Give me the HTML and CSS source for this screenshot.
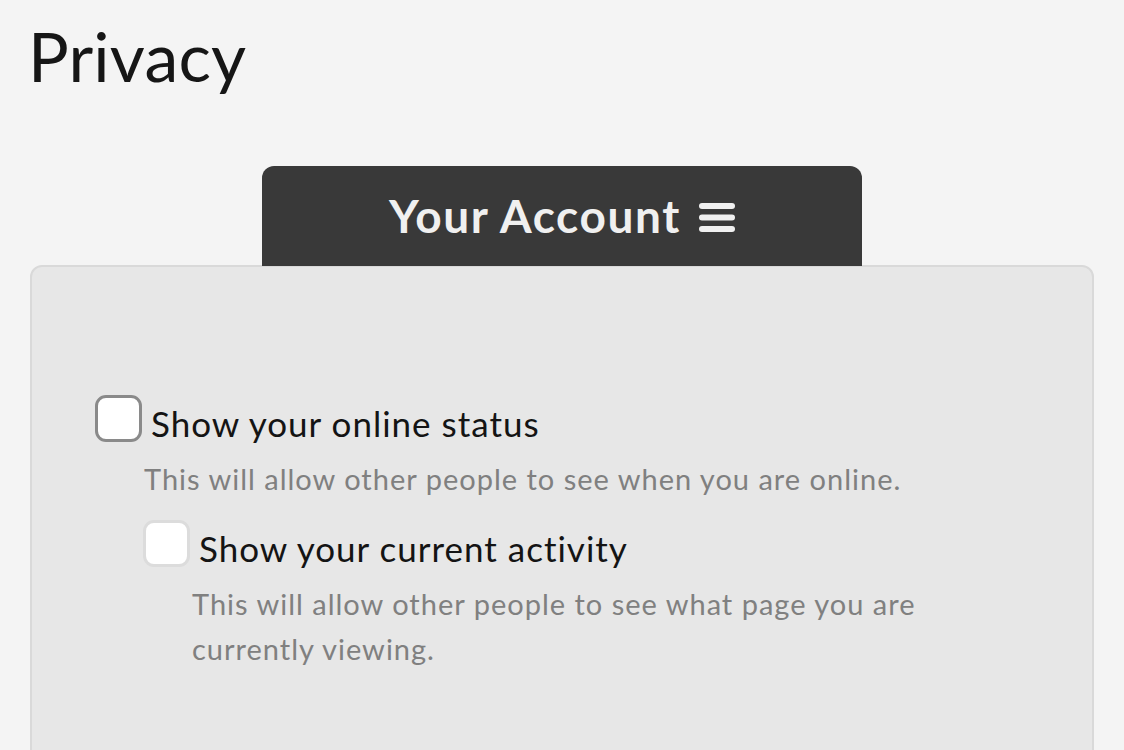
FILE: index.html
```html
<!DOCTYPE html>
<html lang="en">
<head>
<meta charset="utf-8">
<title>Privacy</title>
<link rel="stylesheet" href="styles.css">
</head>
<body>
  <h1 class="page-title">Privacy</h1>
  <div class="tab-wrap">
    <div class="tab">
      <span class="tab-label">Your Account</span>
      <svg class="tab-menu" viewBox="0 0 36 29" width="36" height="29" aria-hidden="true">
        <rect x="0" y="0" width="36" height="6" rx="3" fill="#f0f0f0"/>
        <rect x="0" y="11.5" width="36" height="6" rx="3" fill="#f0f0f0"/>
        <rect x="0" y="23" width="36" height="6" rx="3" fill="#f0f0f0"/>
      </svg>
    </div>
  </div>
  <div class="panel">
    <div class="option">
      <label class="option-row">
        <span class="check check-active"></span>
        <span class="option-label">Show your online status</span>
      </label>
      <p class="option-desc">This will allow other people to see when you are online.</p>
      <div class="option option-nested">
        <label class="option-row">
          <span class="check check-disabled"></span>
          <span class="option-label">Show your current activity</span>
        </label>
        <p class="option-desc">This will allow other people to see what page you are<br>currently viewing.</p>
      </div>
    </div>
  </div>
</body>
</html>
```

FILE: styles.css
```css
html, body {
  margin: 0;
  padding: 0;
  background: #f4f4f4;
}

body {
  padding: 0 30px;
  font-family: "Lato", "Open Sans", sans-serif;
  color: #141414;
  height: 750px;
  overflow: hidden;
}

.page-title {
  margin: 0 0 0 -2px;
  padding-top: 16px;
  font-size: 68px;
  font-weight: 400;
  line-height: 80px;
  letter-spacing: 0.2px;
  color: #161616;
}

.tab-wrap {
  display: flex;
  justify-content: center;
  margin-top: 70px;
}

.tab {
  width: 600px;
  height: 100px;
  background: #393939;
  border-radius: 12px 12px 0 0;
  display: flex;
  align-items: center;
  justify-content: center;
  gap: 18px;
  box-sizing: border-box;
  padding-bottom: 2px;
}

.tab-label {
  color: #f0f0f0;
  font-weight: 700;
  font-size: 46px;
  letter-spacing: 1.6px;
}

.tab-menu {
  display: block;
  margin-top: 4px;
}

.panel {
  margin-top: -1px;
  background: #e7e7e7;
  border: 2px solid #d9d9d9;
  border-radius: 12px;
  height: 560px;
  box-sizing: border-box;
  padding: 128px 60px 0 63px;
}

.option-row {
  display: flex;
  align-items: center;
  gap: 9px;
}

.check {
  width: 47px;
  height: 47px;
  box-sizing: border-box;
  background: #ffffff;
  border-radius: 11px;
  flex: none;
}

.check-active {
  border: 3px solid #8a8a8a;
}

.check-disabled {
  border: 3px solid #dcdcdc;
}

.option-label {
  font-size: 35px;
  letter-spacing: 1px;
  color: #141414;
  position: relative;
  top: 4px;
}

.option-desc {
  margin: 14px 0 0 49px;
  font-size: 29px;
  line-height: 45px;
  letter-spacing: 1px;
  color: #808080;
}

.option-nested {
  margin: 19px 0 0 48px;
}
```
